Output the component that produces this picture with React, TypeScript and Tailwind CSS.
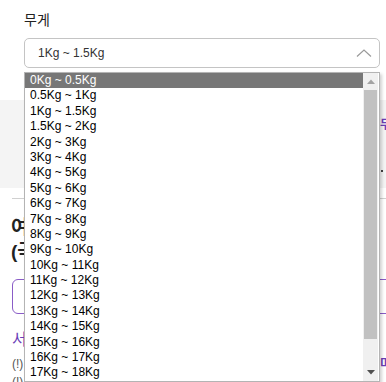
import React from "react"

const options = [
  "0Kg ~ 0.5Kg",
  "0.5Kg ~ 1Kg",
  "1Kg ~ 1.5Kg",
  "1.5Kg ~ 2Kg",
  "2Kg ~ 3Kg",
  "3Kg ~ 4Kg",
  "4Kg ~ 5Kg",
  "5Kg ~ 6Kg",
  "6Kg ~ 7Kg",
  "7Kg ~ 8Kg",
  "8Kg ~ 9Kg",
  "9Kg ~ 10Kg",
  "10Kg ~ 11Kg",
  "11Kg ~ 12Kg",
  "12Kg ~ 13Kg",
  "13Kg ~ 14Kg",
  "14Kg ~ 15Kg",
  "15Kg ~ 16Kg",
  "16Kg ~ 17Kg",
  "17Kg ~ 18Kg",
  "18Kg ~ 19Kg",
  "19Kg ~ 20Kg",
]

export default function App() {
  return (
    <div className="relative w-[386px] h-[382px] overflow-hidden bg-white font-['Liberation_Sans','Noto_Sans_CJK_KR',sans-serif] text-[#333]">
      <div className="w-[440px]">
        {/* weight field */}
        <div className="pl-[24px] pt-[12px]">
          <p className="text-[14px] leading-[16px] text-[#222]">무게</p>
          <div className="mt-[10px] w-[356px] h-[30px] border border-[#c4c4c4] rounded-[5px] flex items-center justify-between pl-[13px] pr-[7px]">
            <span className="text-[12px] text-[#333]">1Kg ~ 1.5Kg</span>
            <svg width="16" height="8" viewBox="0 0 16 8">
              <polyline points="1,7.5 8,1 15,7.5" fill="none" stroke="#9a9a9a" strokeWidth="1.2" />
            </svg>
          </div>
        </div>

        {/* summary card */}
        <div className="mt-[32px] h-[88px] bg-[#f4f4f4] grid grid-cols-[380px_1fr]">
          <div />
          <div className="pt-[18px] flex flex-col gap-[38px]">
            <span className="text-[12px] leading-[14px] font-bold text-[#6b3fb8]">무료</span>
            <span className="w-[2px] h-[2px] bg-[#444] ml-[1px]" />
          </div>
        </div>

        <div className="mt-[10px] ml-[12px] h-px bg-[#d0d0d0]" />

        {/* section */}
        <div className="pl-[11px] pt-[17px]">
          <h2 className="text-[19px] leading-[24px] font-bold text-[#222]">여행 물품 정보</h2>
          <h2 className="text-[19px] leading-[24px] font-bold text-[#222]">(국내 배송 기준)</h2>
          <div className="mt-[15px] ml-px w-[400px] h-[35px] border border-[#8a5cc7] rounded-[6px]" />
          <p className="mt-[18px] ml-px text-[16px] leading-[16px] text-[#6b3fb8]">서비스 안내</p>
          <div className="mt-[8px] ml-px grid grid-cols-[368px_1fr] text-[12px] leading-[16px] text-[#555]">
            <span>(!) 무게 기준 안내</span>
            <span className="font-bold text-[#6b3fb8]">미</span>
            <span className="mt-[2px]">(!) 추가 요금 안내</span>
          </div>
        </div>
      </div>

      {/* open select list */}
      <div className="absolute left-[24px] top-[72px] w-[356px] h-[310px] bg-white border border-[#b4b4b4] shadow-[2px_2px_3px_rgba(0,0,0,0.18)] flex pr-px overflow-hidden">
        <ul className="flex-1">
          {options.map((o, i) => (
            <li
              key={o}
              className={
                i === 0
                  ? "h-[15.4px] pl-[5px] text-[12px] leading-[15.4px] bg-[#777777] text-white"
                  : "h-[15.4px] pl-[5px] text-[12px] leading-[15.4px] text-black"
              }
            >
              {o}
            </li>
          ))}
        </ul>
        <div className="w-[15px] bg-[#f0f0f0] flex flex-col items-center">
          <div className="h-[17px] flex items-center justify-center">
            <svg width="8" height="5" viewBox="0 0 8 5">
              <polygon points="0,5 4,0.5 8,5" fill="#a3a3a3" />
            </svg>
          </div>
          <div className="w-[13px] h-[249px] bg-[#c1c1c1]" />
          <div className="flex-1" />
          <div className="h-[17px] flex items-center justify-center">
            <svg width="8" height="5" viewBox="0 0 8 5">
              <polygon points="0,0 8,0 4,4.5" fill="#505050" />
            </svg>
          </div>
        </div>
      </div>
    </div>
  )
}
